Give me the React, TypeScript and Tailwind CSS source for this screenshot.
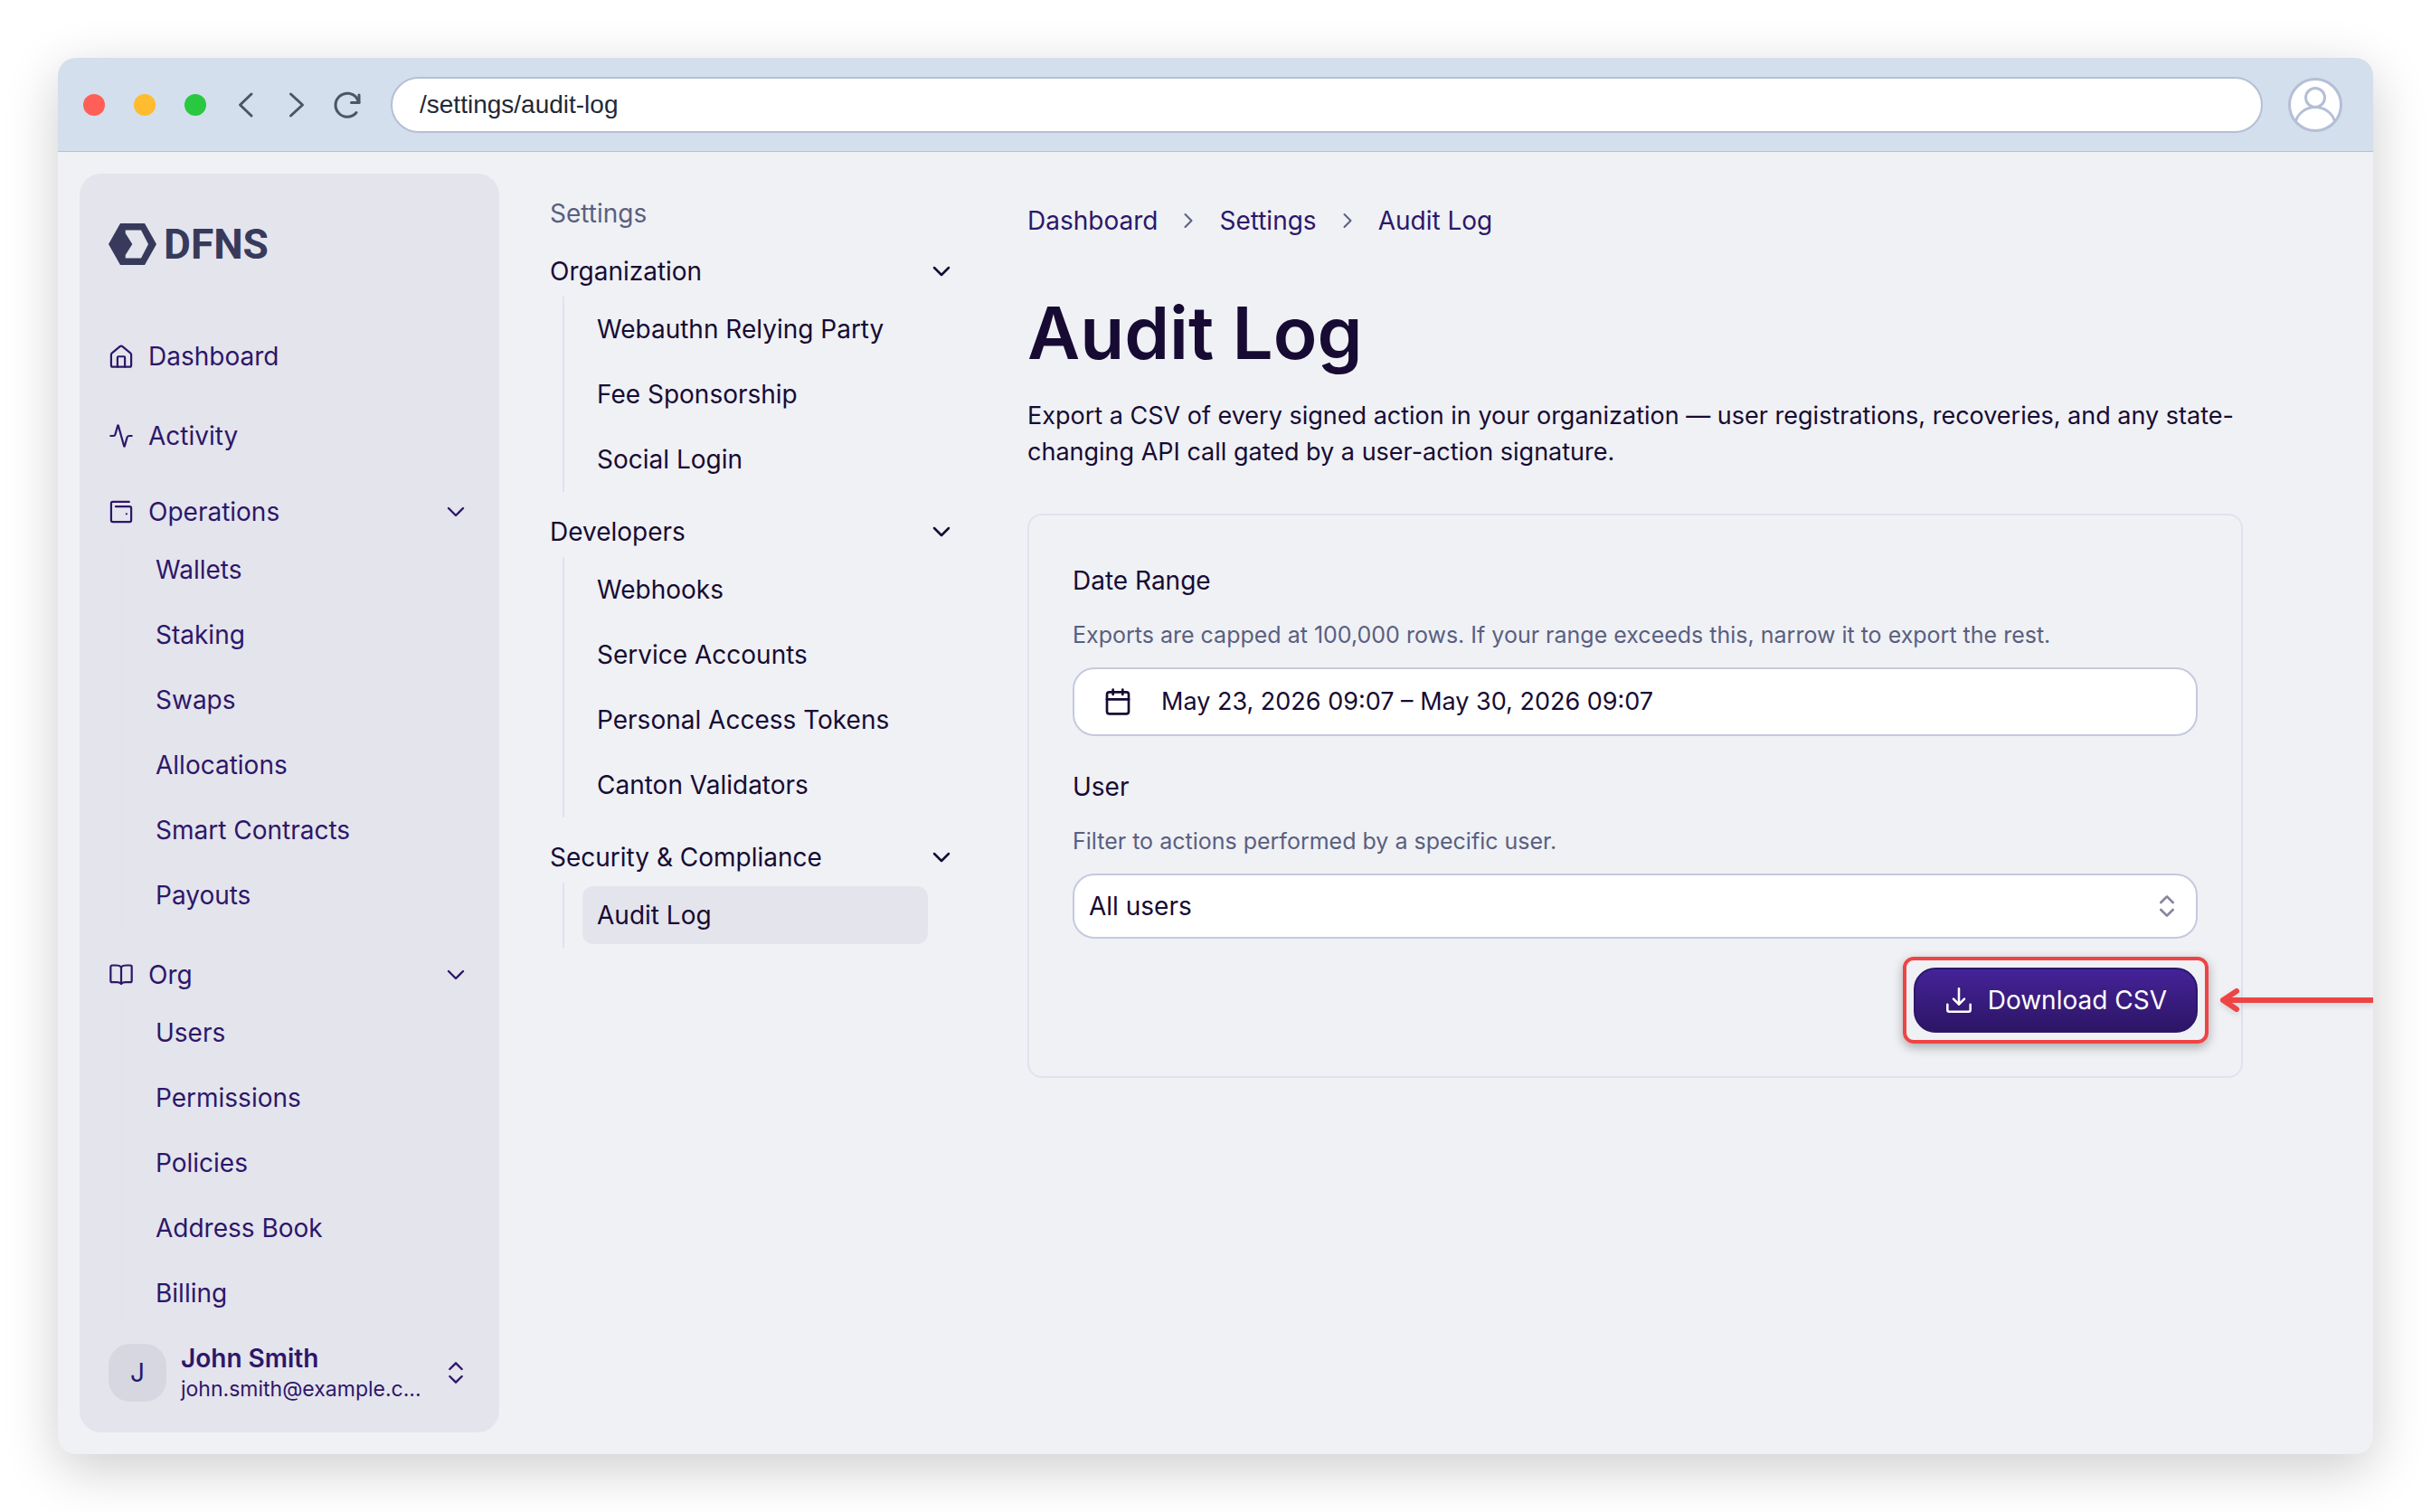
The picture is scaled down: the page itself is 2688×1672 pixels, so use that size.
import type { ReactNode } from 'react'
import { Activity, Calendar, ChevronDown, ChevronRight, ChevronsUpDown } from 'lucide-react'

const operations = ['Wallets', 'Staking', 'Swaps', 'Allocations', 'Smart Contracts', 'Payouts']
const org = ['Users', 'Permissions', 'Policies', 'Address Book', 'Billing']

const settings = [
  { title: 'Organization', items: ['Webauthn Relying Party', 'Fee Sponsorship', 'Social Login'] },
  { title: 'Developers', items: ['Webhooks', 'Service Accounts', 'Personal Access Tokens', 'Canton Validators'] },
  { title: 'Security & Compliance', items: ['Audit Log'] },
]

function Icon({ children, className = 'size-7' }: { children: ReactNode; className?: string }) {
  return (
    <svg
      viewBox="0 0 24 24" fill="none" stroke="currentColor" strokeWidth={1.9}
      strokeLinecap="round" strokeLinejoin="round" className={`${className} shrink-0`} aria-hidden="true"
    >
      {children}
    </svg>
  )
}

const HomeIcon = () => (
  <Icon>
    <path d="M2.500 10.500a2 2 0 0 1 .8-1.600l7.500-6.200a2 2 0 0 1 2.400 0l7.500 6.200a2 2 0 0 1 .8 1.600V20.500a1.500 1.500 0 0 1-1.500 1.500h-16a1.500 1.500 0 0 1-1.500-1.500z" />
    <path d="M8.500 22v-9a.8.8 0 0 1 .8-.8h5.400a.8.8 0 0 1 .8.8v9" />
  </Icon>
)

const WalletIcon = () => (
  <Icon>
    <path d="M19.500 2.500H4A1.500 1.500 0 0 0 2.500 4v16A1.500 1.500 0 0 0 4 21.500h16a1.500 1.500 0 0 0 1.500-1.500V8.500A1.500 1.500 0 0 0 20 7H6.800" />
    <path d="M17 14h.01" />
  </Icon>
)

const BookIcon = () => (
  <Icon>
    <path d="M12 4.500C11 3.500 9 3 7 3H3.500A1.500 1.500 0 0 0 2 4.500v13A1.500 1.500 0 0 0 3.500 19H8c2 0 3 .5 4 1.500 1-1 2-1.500 4-1.500h4.500a1.500 1.500 0 0 0 1.500-1.500v-13A1.500 1.500 0 0 0 20.500 3H17c-2 0-4 .5-5 1.500z" />
    <path d="M12 4.500v16" />
  </Icon>
)

function BrowserBar() {
  return (
    <header className="flex h-[104px] items-center rounded-t-[20px] border-b border-[#b4c0d6] bg-[#d3dfec] pl-7 pr-[34px] text-[#4b5563]">
      <div className="flex gap-8">
        <span className="size-6 rounded-full bg-[#ff5f57]" />
        <span className="size-6 rounded-full bg-[#febc2e]" />
        <span className="size-6 rounded-full bg-[#28c840]" />
      </div>
      <div className="ml-7 flex items-center gap-6">
        <button aria-label="Back">
          <svg viewBox="0 0 32 32" className="size-8" fill="none" stroke="currentColor" strokeWidth="3" strokeLinecap="round" strokeLinejoin="round"><path d="M22 4 9.500 16 22 28" /></svg>
        </button>
        <button aria-label="Forward">
          <svg viewBox="0 0 32 32" className="size-8" fill="none" stroke="currentColor" strokeWidth="3" strokeLinecap="round" strokeLinejoin="round"><path d="m9.500 4 13 12-13 12" /></svg>
        </button>
        <button aria-label="Reload">
          <svg viewBox="0 0 32 32" className="size-8" fill="none" stroke="currentColor" strokeWidth="3" strokeLinecap="round" strokeLinejoin="round">
            <path d="M26 24.500A13 13 0 1 1 26.500 8.500L29 13.500" />
            <path d="M29 5v8.500h-8.500" />
          </svg>
        </button>
      </div>
      <input
        aria-label="Address" defaultValue="/settings/audit-log"
        className="ml-8 h-[62px] min-w-0 flex-1 rounded-full border-2 border-[#b4bfd6] bg-white px-[30px] font-['Liberation_Sans',sans-serif] text-[28px] text-[#1f2937]"
      />
      <button aria-label="Profile" className="ml-7">
        <svg viewBox="0 0 60 60" className="size-[60px]" fill="none" stroke="#b4bfd6" strokeWidth="3">
          <circle cx="30" cy="30" r="28.500" fill="#fff" />
          <circle cx="30" cy="22" r="10.500" />
          <path d="M8.500 48C11 39 20 32.500 30 32.500S49 39 51.500 48" />
        </svg>
      </button>
    </header>
  )
}

function NavGroup({ icon, title, items }: { icon: ReactNode; title: string; items: string[] }) {
  return (
    <section>
      <button className="flex h-14 w-full items-center gap-4">
        {icon}
        <span>{title}</span>
        <ChevronDown className="ml-auto size-8" strokeWidth={1.75} />
      </button>
      <ul className="ml-3.5 border-l-2 border-[#e0e4f0] pl-9">
        {items.map((item) => (
          <li key={item}><a href="#" className="flex h-[72px] items-center">{item}</a></li>
        ))}
      </ul>
    </section>
  )
}

function Sidebar() {
  return (
    <aside className="flex w-[464px] shrink-0 flex-col rounded-3xl bg-[#e4e4ed] px-8 pt-[50px] pb-8 text-[#2d1769]">
      <a href="#" className="flex h-14 items-center gap-2 text-[#373a5b]" aria-label="DFNS">
        <svg viewBox="0 0 53 46" className="h-[46px] w-[53px]" fill="currentColor" fillRule="evenodd">
          <path d="M13 0h27l13 23-13 23H13L0 23zM18.700 7.500V11L26.300 23l-7.600 12v3.500H36L44 23 36 7.500z" />
        </svg>
        <span className="font-[Roboto,sans-serif] text-[46px] leading-14 font-bold">DFNS</span>
      </a>
      <nav className="mt-[68px] flex flex-col">
        <a href="#" className="flex h-14 items-center gap-4"><HomeIcon />Dashboard</a>
        <a href="#" className="mt-8 mb-7 flex h-14 items-center gap-4">
          <Activity className="size-7" strokeWidth={1.9} />Activity
        </a>
        <div className="flex flex-col gap-6">
          <NavGroup icon={<WalletIcon />} title="Operations" items={operations} />
          <NavGroup icon={<BookIcon />} title="Org" items={org} />
        </div>
      </nav>
      <button className="mt-auto flex items-center gap-4 text-left">
        <span className="flex size-16 shrink-0 items-center justify-center rounded-3xl bg-[#d7d7e1]">J</span>
        <span className="min-w-0 flex-1">
          <span className="block leading-9 font-semibold">John Smith</span>
          <span className="block text-[23px] leading-8 whitespace-nowrap">john.smith@example.c...</span>
        </span>
        <ChevronsUpDown className="size-8 shrink-0" strokeWidth={1.75} />
      </button>
    </aside>
  )
}

function SettingsNav() {
  return (
    <nav className="w-[449px] shrink-0 pt-4">
      <p className="leading-14 text-[#5a5f80]">Settings</p>
      <div className="mt-2 flex flex-col gap-4">
        {settings.map((group) => (
          <section key={group.title}>
            <button className="flex h-14 w-full items-center justify-between">
              {group.title}
              <ChevronDown className="size-8" strokeWidth={1.9} />
            </button>
            <ul className="mr-[31px] ml-3.5 border-l-2 border-[#dfe2f0] pl-5">
              {group.items.map((item) => (
                <li key={item} className="py-1">
                  <a
                    href="#"
                    className={`flex h-16 items-center rounded-xl px-4 whitespace-nowrap ${item === 'Audit Log' ? 'bg-[#e4e4ed]' : ''}`}
                  >
                    {item}
                  </a>
                </li>
              ))}
            </ul>
          </section>
        ))}
      </div>
    </nav>
  )
}

function AuditLog() {
  return (
    <main className="min-w-0 flex-1 pt-8">
      <nav aria-label="Breadcrumb" className="flex items-center gap-5 leading-10 text-[#2d1769]">
        <a href="#">Dashboard</a>
        <ChevronRight className="size-7 text-[#5a5f80]" strokeWidth={1.75} />
        <a href="#">Settings</a>
        <ChevronRight className="size-7 text-[#5a5f80]" strokeWidth={1.75} />
        <a href="#">Audit Log</a>
      </nav>
      <h1 className="mt-14 text-[80px] leading-24 font-semibold">Audit Log</h1>
      <p className="mt-6 text-[27px] leading-10">
        Export a CSV of every signed action in your organization — user registrations, recoveries, and any state-changing API call gated by a user-action signature.
      </p>

      <form className="mt-12 rounded-2xl border-2 border-[#dfe3ef] p-12">
        <label htmlFor="range" className="block leading-12">Date Range</label>
        <p className="mt-4 text-[25px] leading-10 text-[#5a5f80]">
          Exports are capped at 100,000 rows. If your range exceeds this, narrow it to export the rest.
        </p>
        <button id="range" type="button" className="mt-4 flex h-[76px] w-full items-center gap-8 rounded-3xl border-2 border-[#c5c9df] bg-white px-8 text-[27px]">
          <Calendar className="size-8" />
          May 23, 2026 09:07 – May 30, 2026 09:07
        </button>

        <label htmlFor="user" className="mt-8 block leading-12">User</label>
        <p className="mt-4 text-[25px] leading-10 text-[#5a5f80]">Filter to actions performed by a specific user.</p>
        <div className="relative mt-4">
          <select id="user" className="block h-[72px] w-full appearance-none rounded-3xl border-2 border-[#c5c9df] bg-white px-4">
            <option>All users</option>
          </select>
          <ChevronsUpDown className="pointer-events-none absolute top-5 right-[18px] size-8 text-[#8a859b]" />
        </div>

        <div className="mt-8 flex justify-end">
          <div className="relative">
            <button type="button" className="flex h-[72px] items-center gap-4 rounded-3xl border-2 border-[#2d1769] bg-linear-to-b from-[#452399] to-[#2d1566] px-8 whitespace-nowrap text-white">
              <Icon className="size-8">
                <path d="M12 2.500v13M7.500 11l4.500 4.500 4.500-4.500M2.500 15.500V20A1.500 1.500 0 0 0 4 21.500h16a1.500 1.500 0 0 0 1.500-1.500v-4.500" />
              </Icon>
              Download CSV
            </button>
            <span className="pointer-events-none absolute -inset-3 rounded-xl border-4 border-[#ef4444] shadow-[0_4px_12px_rgba(0,0,0,0.3)]" />
            <svg viewBox="0 0 170 32" className="absolute top-5 left-full ml-6 h-8 w-[170px] drop-shadow-md" fill="none" stroke="#ef4444" strokeWidth="6" strokeLinecap="round" strokeLinejoin="round" aria-hidden="true">
              <path d="M4 16h180M19 6 4 16l15 10" />
            </svg>
          </div>
        </div>
      </form>
    </main>
  )
}

export default function App() {
  return (
    <div className="flex min-h-screen flex-col bg-white p-16 font-[Inter,sans-serif] text-[28px] text-[#170b33]">
      <div className="flex flex-1 flex-col rounded-[20px] bg-[#eff1f5] shadow-[0_16px_60px_rgba(0,0,0,0.2)]">
        <BrowserBar />
        <div className="flex flex-1 overflow-hidden rounded-b-[20px] py-6 pr-36 pl-6">
          <Sidebar />
          <div className="ml-14 flex min-w-0 flex-1 gap-[79px]">
            <SettingsNav />
            <AuditLog />
          </div>
        </div>
      </div>
    </div>
  )
}
